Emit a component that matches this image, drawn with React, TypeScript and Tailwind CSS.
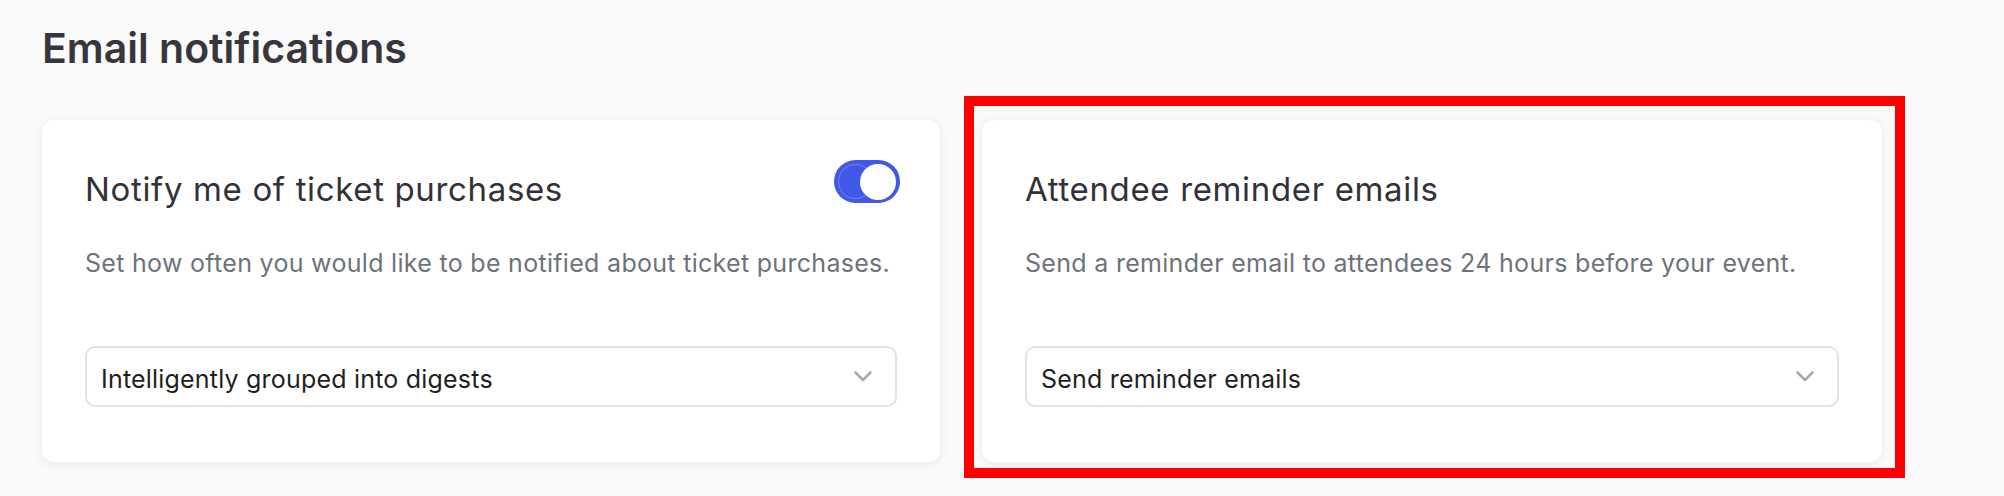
import React from "react";

function Chevron() {
  return (
    <svg width="18" height="11" viewBox="0 0 18 11" fill="none" className="shrink-0">
      <polyline points="1.5,1.5 9,9 16.5,1.5" stroke="#a3aab3" strokeWidth="2.5" strokeLinecap="round" strokeLinejoin="round" />
    </svg>
  );
}

function Select({ value }: { value: string }) {
  return (
    <div className="mt-[70px] h-[63px] rounded-[10px] border-2 border-[#dfe3e8] bg-white flex items-center justify-between pl-[14px] pr-[23px]">
      <span className="text-[25px] leading-none tracking-[0.2px] text-[#1f1f23] pt-[5px]">{value}</span>
      <Chevron />
    </div>
  );
}

function Toggle() {
  return (
    <div className="relative w-[66px] h-[43px] rounded-full bg-[#4157e6] shrink-0 -mr-[3px]">
      <div className="absolute left-[4px] top-[4px] w-[35px] h-[35px] rounded-full border border-white/25" />
      <div className="absolute right-[4px] top-[4px] w-[36px] h-[36px] rounded-full bg-white" />
    </div>
  );
}

function Card({ title, desc, value, toggle }: { title: string; desc: string; value: string; toggle?: boolean }) {
  return (
    <div className="h-[342px] rounded-[12px] bg-white shadow-[0_2px_10px_rgba(0,0,0,0.08)] px-[43px] pt-[40px] pb-[55px] flex flex-col">
      <div className="flex items-start justify-between">
        <div className="mt-[13px] text-[33px] leading-none tracking-[0.65px] text-[#323238]">{title}</div>
        {toggle && <Toggle />}
      </div>
      <div className="mt-[45px] text-[25px] leading-none tracking-[0.3px] text-[#6e737a]">{desc}</div>
      <Select value={value} />
    </div>
  );
}

export default function App() {
  return (
    <div className="min-h-screen w-full bg-[#fafafa] pl-[42px] pt-[28px]" style={{ fontFamily: "Inter, 'Noto Sans', sans-serif" }}>
      <h1 className="text-[41px] leading-none font-semibold text-[#37363d]">Email notifications</h1>
      <div className="mt-[51px] grid grid-cols-[898px_900px] gap-[42px]">
        <Card
          title="Notify me of ticket purchases"
          desc="Set how often you would like to be notified about ticket purchases."
          value="Intelligently grouped into digests"
          toggle
        />
        <div className="relative">
          <Card
            title="Attendee reminder emails"
            desc="Send a reminder email to attendees 24 hours before your event."
            value="Send reminder emails"
          />
          <div className="pointer-events-none absolute left-[-18px] top-[-24px] right-[-23px] bottom-[-16px] border-[10px] border-[#ff0000]" />
        </div>
      </div>
    </div>
  );
}
